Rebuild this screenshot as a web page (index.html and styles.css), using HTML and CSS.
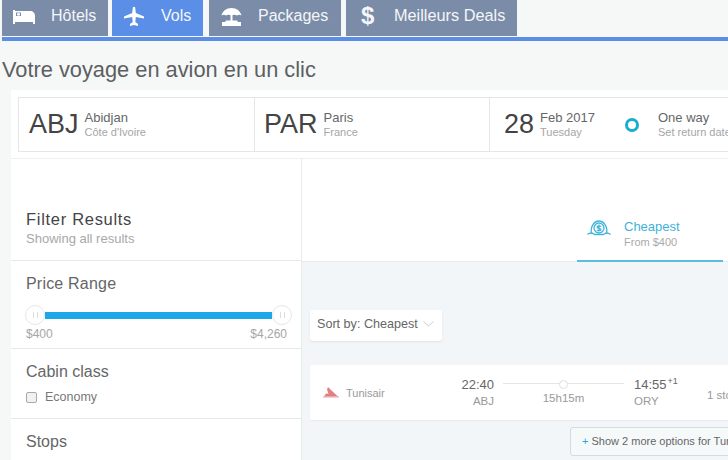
FILE: index.html
```html
<!DOCTYPE html>
<html lang="fr">
<head>
    <meta charset="UTF-8">
    <meta name="viewport" content="width=device-width, initial-scale=1.0">
    <title>Votre voyage en avion en un clic</title>
    <link rel="stylesheet" href="styles.css">
</head>
<body>
    <nav class="tabs">
        <a href="#" class="tab tab-hotels">
            <svg class="tab-icon" width="22" height="14" viewBox="0 0 22 14"><path fill="#fff" d="M0 0h2v1h15c3 0 5 2 5 5v8h-2v-2H2v2H0z"/><path fill="#7b8ca8" d="M3 2.500h5v3.500H3z"/><circle cx="5.500" cy="4.200" r="1.500" fill="#fff"/></svg>
            Hôtels
        </a>
        <a href="#" class="tab tab-vols active">
            <svg class="tab-icon" width="20" height="20" viewBox="0 0 20 20"><path fill="#fff" d="M8.800 1.500C9.200.500 10.800.500 11.200 1.500l.6 5.500 8.200 3.500v2l-8.200-1.500-.5 5 2.700 2V20L10 19l-4 1v-2l2.700-2-.5-5L0 12.500v-2L8.200 7z"/></svg>
            Vols
        </a>
        <a href="#" class="tab tab-packages">
            <svg class="tab-icon" width="21" height="18" viewBox="0 0 21 18"><path fill="#fff" d="M10.500 0c5 0 9 3 10 7.500-1.500-1-3-1-4.500 0-1.500-1-3.500-1-5.500 0-2-1-4-1-5.500 0C3.500 6.500 2 6.500.5 7.500 1.500 3 5.500 0 10.500 0z"/><path fill="#fff" d="M9.500 7h2v6h-2z"/><path fill="#fff" d="M5 12.500h11l1 1.500h3v4H1v-4h3z"/></svg>
            Packages
        </a>
        <a href="#" class="tab tab-deals"><span class="tab-dollar">$</span>Meilleurs Deals</a>
    </nav>

    <h1 class="page-title">Votre voyage en avion en un clic</h1>

    <div class="widget">
        <div class="search-box">
            <div class="search-cell cell-from">
                <span class="code">ABJ</span>
                <div class="place"><span class="place-name">Abidjan</span><span class="place-sub">Côte d'Ivoire</span></div>
            </div>
            <div class="search-cell cell-to">
                <span class="code">PAR</span>
                <div class="place"><span class="place-name">Paris</span><span class="place-sub">France</span></div>
            </div>
            <div class="search-cell cell-date">
                <span class="code">28</span>
                <div class="place"><span class="place-name">Feb 2017</span><span class="place-sub">Tuesday</span></div>
                <span class="ring"></span>
                <div class="place"><span class="place-name">One way</span><span class="place-sub">Set return date</span></div>
            </div>
        </div>

        <div class="results">
            <aside class="filters">
                <div class="filter-head">
                    <h2>Filter Results</h2>
                    <p>Showing all results</p>
                </div>
                <div class="filter-block filter-price">
                    <h3>Price Range</h3>
                    <div class="slider">
                        <span class="handle"><i></i></span>
                        <span class="slider-bar"></span>
                        <span class="handle"><i></i></span>
                    </div>
                    <div class="slider-labels"><span>$400</span><span>$4,260</span></div>
                </div>
                <div class="filter-block filter-cabin">
                    <h3>Cabin class</h3>
                    <label class="check"><span class="check-box"></span>Economy</label>
                </div>
                <div class="filter-block filter-stops">
                    <h3>Stops</h3>
                </div>
            </aside>

            <main class="content">
                <div class="sort-tabs">
                    <div class="sort-tab">
                        <svg width="24" height="16" viewBox="0 0 24 16" fill="none" stroke="#45b4dc" stroke-width="1.300"><path d="M4.500 13.500C3 7 7 1 12 1s9 6 7.500 12.500"/><path d="M.5 14.500c1-1 2-1.500 4-1.500 1.500 0 2 1.500 3 1.500h9c1 0 1.500-1.500 3-1.500 2 0 3 .5 4 1.500"/><circle cx="12" cy="8" r="5"/><path d="M14 6.500c-.8-1-4-1-4 .5 0 1.800 4 .8 4 2.600 0 1.400-3 1.400-4 .4M12 4.500v7"/></svg>
                        <div>
                            <span class="sort-name">Cheapest</span>
                            <span class="sort-from">From $400</span>
                        </div>
                    </div>
                </div>
                <div class="list">
                    <div class="sort-select"><span>Sort by: Cheapest</span>
                        <svg width="11" height="6" viewBox="0 0 11 6" fill="none" stroke="#c8cdd2"><path d="M.5.500l5 4.500 5-4.500"/></svg>
                    </div>
                    <div class="flight">
                        <div class="airline">
                            <svg width="16" height="11" viewBox="0 0 16 11"><path fill="#f4d3d3" d="M0 9h16v2H0z"/><path fill="#e27f80" d="M5 0l4 4 6 5.500H1l2-3 2.500.3L4 2.500z"/></svg>
                            <span>Tunisair</span>
                        </div>
                        <div class="time time-dep"><b>22:40</b><span>ABJ</span></div>
                        <div class="route">
                            <div class="route-line"><span class="route-dot"></span></div>
                            <span class="route-dur">15h15m</span>
                        </div>
                        <div class="time time-arr"><b>14:55<sup>+1</sup></b><span>ORY</span></div>
                        <div class="stops">1 stop</div>
                    </div>
                    <div class="more-row">
                        <button class="more-btn"><em>+</em> Show 2 more options for Tunisair</button>
                    </div>
                </div>
            </main>
        </div>
    </div>
</body>
</html>
```

FILE: styles.css
```css
body {
    margin: 0;
    width: 728px;
    height: 460px;
    overflow: hidden;
    background-color: #f6f7f7;
    font-family: "Liberation Sans", Arial, sans-serif;
    color: #555;
}
.tabs {
    display: flex;
    height: 37px;
    margin-left: 2px;
    border-bottom: 4px solid #5b8ee6;
}
.tab {
    display: flex;
    align-items: center;
    height: 36px;
    padding-bottom: 5px;
    color: #f4f6f9;
    background-color: #7b8ca8;
    text-decoration: none;
    font-size: 16px;
    box-sizing: border-box;
}
.tab-hotels {
    width: 106px;
    padding-left: 11px;
}
.tab-hotels .tab-icon {
    margin: 2px 16px 0 0;
}
.tab-vols {
    width: 91px;
    margin-left: 4px;
    padding-left: 12px;
}
.tab-vols .tab-icon {
    margin-right: 17px;
}
.tab-packages {
    width: 132px;
    margin-left: 6px;
    padding-left: 12px;
}
.tab-packages .tab-icon {
    margin: 2px 16px 0 0;
}
.tab-deals {
    width: 171px;
    margin-left: 5px;
    padding-left: 15px;
    font-size: 16.3px;
}
.tab-dollar {
    width: 33px;
    font-size: 24px;
    font-weight: bold;
}
.tab.active {
    background-color: #5b8ee6;
}
.page-title {
    margin: 17px 0 8px 2px;
    height: 24px;
    font-size: 21.8px;
    line-height: 24px;
    font-weight: normal;
    color: #5c5f62;
}
.widget {
    display: flex;
    flex-direction: column;
    height: 370px;
    margin-left: 11px;
    padding-top: 7px;
    background-color: #fff;
    box-sizing: border-box;
}
.search-box {
    display: flex;
    flex-shrink: 0;
    height: 55px;
    margin-left: 7px;
    background-color: #fff;
    border: 1px solid #e4e6e7;
    border-right: 0;
    box-sizing: border-box;
    overflow: hidden;
}
.search-cell {
    display: flex;
    flex-shrink: 0;
    align-items: center;
    border-right: 1px solid #e4e6e7;
    box-sizing: border-box;
}
.cell-from {
    width: 236px;
    padding-left: 10px;
}
.cell-to {
    width: 235px;
    padding-left: 9px;
}
.cell-date {
    padding-left: 14px;
    border-right: 0;
}
.code {
    font-size: 27px;
    color: #444;
    margin-right: 6px;
}
.place {
    display: flex;
    flex-direction: column;
    font-size: 13px;
    line-height: 15px;
    white-space: nowrap;
}
.place-name {
    color: #666;
}
.place-sub {
    font-size: 11px;
    color: #a6a6a6;
}
.ring {
    width: 8px;
    height: 8px;
    margin: 0 19px 0 30px;
    border: 3px solid #17aed0;
    border-radius: 50%;
}
.results {
    display: flex;
    flex: 1;
    min-height: 0;
    margin-top: 6px;
    border-top: 1px solid #efefef;
    overflow: hidden;
}
.filters {
    width: 291px;
    flex-shrink: 0;
    border-right: 1px solid #e8eaeb;
    box-sizing: border-box;
}
.filter-head {
    height: 102px;
    padding: 51px 0 0 15px;
    box-sizing: border-box;
    border-bottom: 1px solid #e8e8e8;
}
.filter-head h2 {
    margin: 0;
    font-size: 16.500px;
    line-height: 18px;
    letter-spacing: 0.7px;
    font-weight: normal;
    color: #444;
}
.filter-head p {
    margin: 3px 0 0;
    font-size: 13px;
    line-height: 15px;
    color: #a8a8a8;
}
.filter-block {
    padding: 14px 0 0 15px;
    box-sizing: border-box;
    border-bottom: 1px solid #e8e8e8;
}
.filter-block h3 {
    margin: 0;
    font-size: 16px;
    line-height: 18px;
    font-weight: normal;
    color: #666;
}
.filter-price {
    height: 88px;
}
.filter-price h3 {
    letter-spacing: 0.2px;
}
.filter-cabin {
    height: 70px;
}
.filter-stops {
    border-bottom: 0;
}
.slider {
    display: flex;
    align-items: center;
    width: 267px;
    margin: 12px 0 0 -1px;
    height: 20px;
}
.handle {
    display: flex;
    justify-content: center;
    align-items: center;
    width: 20px;
    height: 20px;
    flex-shrink: 0;
    background-color: #fff;
    border: 1px solid #e6e6e6;
    border-radius: 50%;
    box-sizing: border-box;
}
.handle i {
    width: 3px;
    height: 6px;
    border-left: 1px solid #ddd;
    border-right: 1px solid #ddd;
}
.slider-bar {
    flex: 1;
    height: 7px;
    background-color: #1ea7e8;
}
.slider-labels {
    display: flex;
    justify-content: space-between;
    width: 261px;
    margin-top: 2px;
    font-size: 12px;
    line-height: 14px;
    color: #a6a6a6;
}
.check {
    display: flex;
    align-items: center;
    margin-top: 9px;
    font-size: 12.500px;
    line-height: 15px;
    color: #777;
}
.check-box {
    width: 9px;
    height: 9px;
    margin-right: 8px;
    background-color: #f1f1f1;
    border: 1px solid #a9a9a9;
    border-radius: 2px;
}
.content {
    flex: 1;
    min-width: 0;
    overflow: hidden;
}
.sort-tabs {
    display: flex;
    align-items: flex-start;
    height: 103px;
    padding-left: 275px;
    background-color: #fff;
    border-bottom: 1px solid #e6ecef;
    box-sizing: border-box;
}
.sort-tab {
    display: flex;
    align-items: flex-start;
    width: 146px;
    height: 103px;
    padding: 60px 0 0 10px;
    box-sizing: border-box;
    border-bottom: 2px solid #5cbde0;
}
.sort-tab svg {
    margin: 1px 13px 0 0;
}
.sort-name {
    display: block;
    font-size: 13px;
    line-height: 15px;
    color: #3fb2dc;
}
.sort-from {
    display: block;
    margin-top: 2px;
    font-size: 11px;
    line-height: 13px;
    color: #aaa;
}
.list {
    height: 210px;
    padding: 48px 0 0 8px;
    background-color: #f3f6f8;
    box-sizing: border-box;
}
.sort-select {
    display: flex;
    align-items: center;
    gap: 5px;
    width: 132px;
    height: 31px;
    padding: 0 0 3px 7px;
    font-size: 12.600px;
    color: #666;
    white-space: nowrap;
    background-color: #fff;
    border-radius: 3px;
    box-shadow: 0 1px 2px rgba(0, 0, 0, 0.08);
    box-sizing: border-box;
}
.flight {
    display: flex;
    align-items: center;
    width: 500px;
    height: 55px;
    margin-top: 24px;
    background-color: #fff;
    border-radius: 2px;
    box-shadow: 0 1px 1px rgba(0, 0, 0, 0.05);
}
.airline {
    display: flex;
    align-items: center;
    width: 130px;
    padding-left: 13px;
    font-size: 11px;
    color: #999;
    box-sizing: border-box;
}
.airline svg {
    margin-right: 7px;
}
.time {
    display: flex;
    flex-direction: column;
    font-size: 11.500px;
    line-height: 15px;
    color: #999;
}
.time b {
    font-weight: normal;
    font-size: 13px;
    line-height: 18px;
    color: #666;
}
.time sup {
    font-size: 9px;
    line-height: 0;
    margin-left: 1px;
}
.time-dep {
    width: 54px;
    text-align: right;
}
.route {
    display: flex;
    flex-direction: column;
    align-items: center;
    width: 121px;
    margin: 0 10px 0 9px;
    padding-top: 2px;
    font-size: 11.500px;
    color: #999;
}
.route-line {
    display: flex;
    justify-content: center;
    width: 100%;
    height: 1px;
    margin-bottom: 8px;
    background-color: #e3e6e8;
}
.route-dot {
    width: 7px;
    height: 7px;
    margin-top: -3px;
    flex-shrink: 0;
    background-color: #fff;
    border: 1px solid #dcdfe1;
    border-radius: 50%;
}
.time-arr {
    width: 73px;
}
.stops {
    font-size: 11.500px;
    color: #999;
    margin-top: 4px;
    white-space: nowrap;
}
.more-row {
    display: flex;
    margin-top: 7px;
    padding-left: 260px;
}
.more-btn {
    flex-shrink: 0;
    width: 240px;
    height: 29px;
    padding: 0 0 2px 11px;
    font-family: inherit;
    font-size: 11px;
    color: #666;
    text-align: left;
    white-space: nowrap;
    background-color: #f6f9fa;
    border: 1px solid #d5dbde;
    border-radius: 3px;
}
.more-btn em {
    font-style: normal;
    color: #2aa7d8;
}
```
